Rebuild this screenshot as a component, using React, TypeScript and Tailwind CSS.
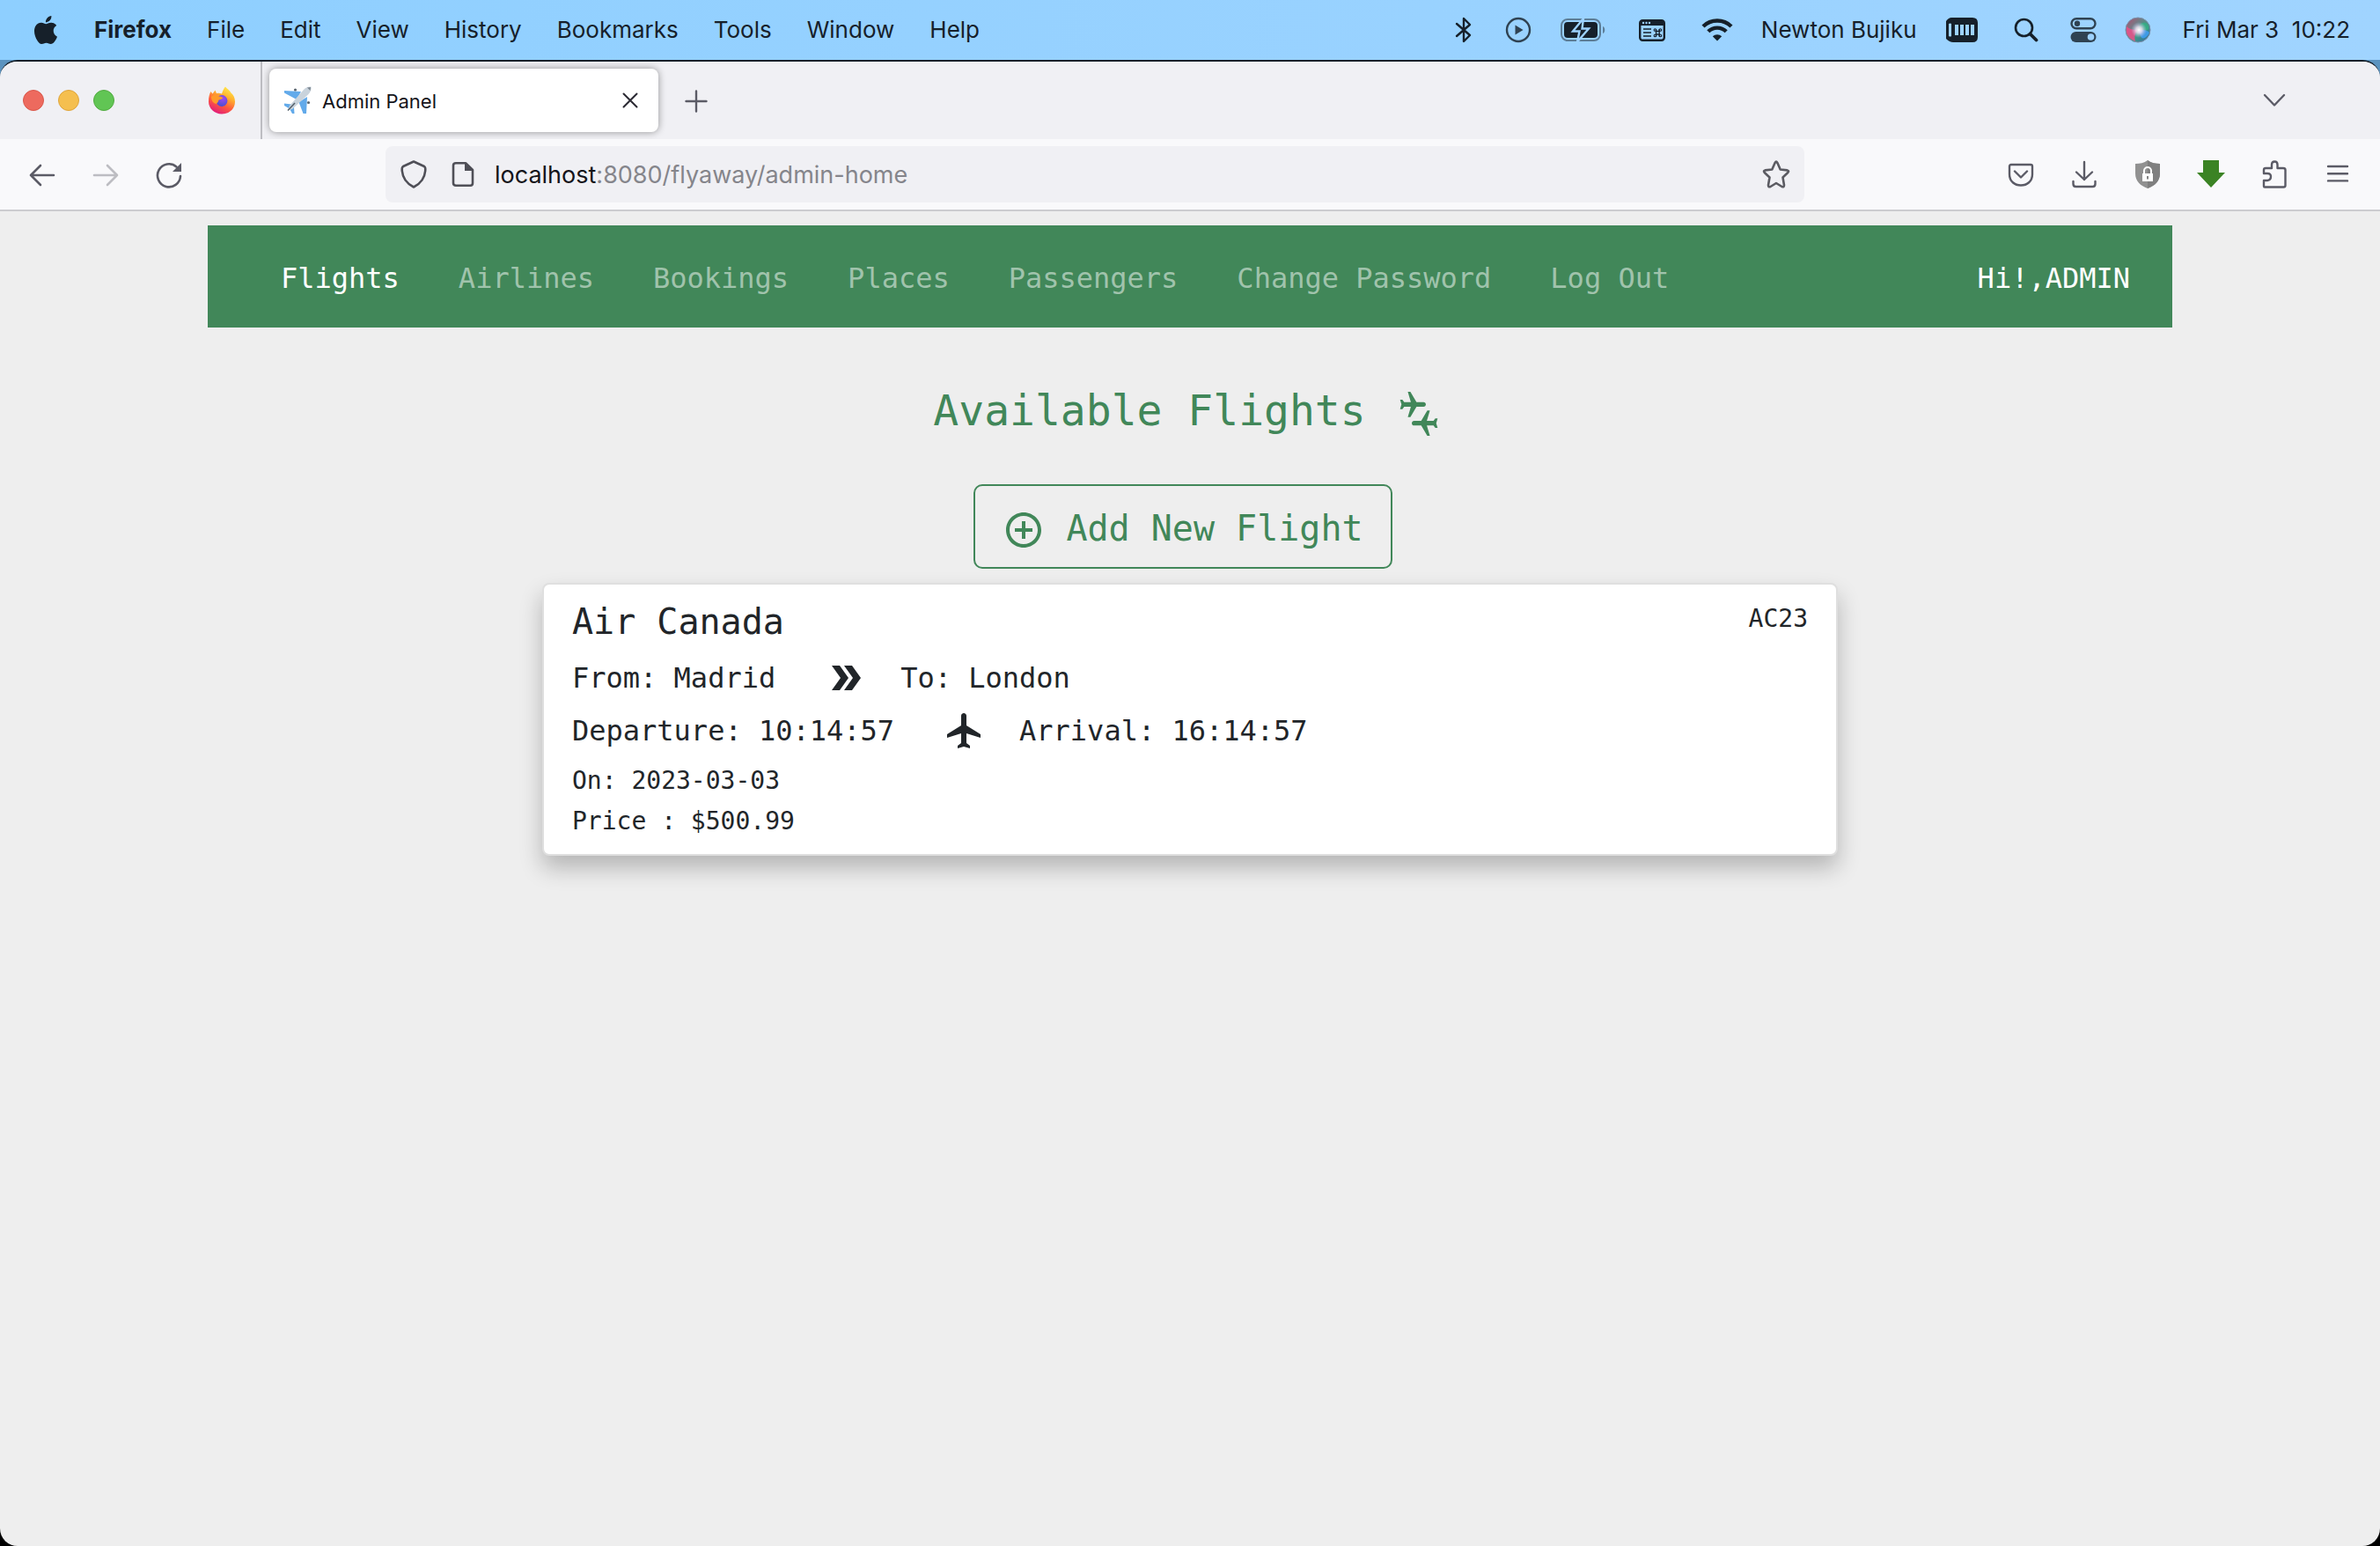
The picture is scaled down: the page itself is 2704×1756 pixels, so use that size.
import React from "react";
import { MdConnectingAirports, MdAddCircleOutline, MdDoubleArrow, MdFlight } from "react-icons/md";

const menus = ["File", "Edit", "View", "History", "Bookmarks", "Tools", "Window", "Help"];
const navLinks = ["Flights", "Airlines", "Bookings", "Places", "Passengers", "Change Password", "Log Out"];

function AppleLogo() {
  return (
    <svg viewBox="0 0 24 24" className="h-8 w-8" fill="#16202a" aria-hidden="true">
      <path d="M12.152 6.896c-.948 0-2.415-1.078-3.96-1.04-2.04.027-3.91 1.183-4.961 3.014-2.117 3.675-.546 9.103 1.519 12.09 1.013 1.454 2.208 3.09 3.792 3.039 1.52-.065 2.09-.987 3.935-.987 1.831 0 2.35.987 3.96.948 1.637-.026 2.676-1.48 3.676-2.948 1.156-1.688 1.636-3.325 1.662-3.415-.039-.013-3.182-1.221-3.22-4.857-.026-3.04 2.48-4.494 2.597-4.559-1.429-2.09-3.623-2.324-4.39-2.376-2-.156-3.675 1.09-4.61 1.09zM15.53 3.83c.843-1.012 1.4-2.427 1.245-3.83-1.207.052-2.662.805-3.532 1.818-.78.896-1.454 2.338-1.273 3.714 1.338.104 2.715-.688 3.559-1.701" />
    </svg>
  );
}

function StatusIcons() {
  return (
    <>
      <svg viewBox="0 0 20 32" className="h-8 w-5" fill="none" stroke="#16202a" strokeWidth="2.4" strokeLinejoin="round" strokeLinecap="round" role="img" aria-label="Bluetooth">
        <path d="M2 9 L17 22 L10 29 V3 L17 10 L2 23" />
      </svg>
      <svg viewBox="0 0 32 32" className="ml-9 h-8 w-8" role="img" aria-label="Now playing">
        <circle cx="16" cy="16" r="13" fill="none" stroke="#2f4252" strokeWidth="2.4" />
        <path d="M12.5 10.5 V21.5 L21.5 16 Z" fill="#2f4252" />
      </svg>
      <svg viewBox="0 0 52 32" className="ml-8 h-8 w-[52px]" role="img" aria-label="Battery charging">
        <rect x="1" y="4" width="44" height="24" rx="7" fill="none" stroke="#5c7d97" strokeWidth="2" />
        <path d="M48 12 C51 13 51 19 48 20 Z" fill="#5c7d97" />
        <rect x="4" y="7" width="38" height="18" rx="4" fill="#16202a" />
        <path d="M26 3 L14 17.5 H21.5 L19 29.5 L32 14.5 H24.5 Z" fill="#16202a" stroke="#9dd2ff" strokeWidth="2.4" />
      </svg>
      <svg viewBox="0 0 32 32" className="ml-9 h-8 w-8" role="img" aria-label="Shortcuts">
        <rect x="2.2" y="5.2" width="27.6" height="22.6" rx="3" fill="none" stroke="#16202a" strokeWidth="2.4" />
        <path d="M2 6 H30 V11 H2 Z" fill="#16202a" />
        <g fill="#9dd2ff">
          <circle cx="6" cy="8" r="1.2" />
          <circle cx="9.500" cy="8" r="1.2" />
          <circle cx="13" cy="8" r="1.2" />
        </g>
        <path d="M6 15 H15 M6 19 H15 M6 23 H15" stroke="#16202a" strokeWidth="1.6" />
        <path d="M20 17.500 H25 M20 21 H25 M20.500 15 V23.500 M24.200 15 V23.500" stroke="#16202a" strokeWidth="1.3" />
        <g fill="none" stroke="#16202a" strokeWidth="1.1">
          <circle cx="19.400" cy="16" r="1.300" />
          <circle cx="25.400" cy="16" r="1.300" />
          <circle cx="19.400" cy="22.500" r="1.300" />
          <circle cx="25.400" cy="22.500" r="1.300" />
        </g>
      </svg>
      <svg viewBox="0 0 36 28" className="ml-10 h-7 w-9" role="img" aria-label="Wi-Fi" fill="none" stroke="#16202a">
        <path d="M2 10 A23 23 0 0 1 34 10" strokeWidth="4.400" />
        <path d="M7.800 15.800 A14.500 14.500 0 0 1 28.200 15.800" strokeWidth="4.400" />
        <path d="M18 26.500 L12.800 21.300 A7.500 7.500 0 0 1 23.200 21.300 Z" fill="#16202a" stroke="none" />
      </svg>
    </>
  );
}

function RightStatusIcons() {
  return (
    <>
      <svg viewBox="0 0 38 32" className="ml-8 h-8 w-[38px]" role="img" aria-label="Memory">
        <path d="M7 2 H31 Q37 2 37 8 V24 Q37 30 31 30 H9 Q5 30 1 26 V6 Q4 2 7 2 Z" fill="#16202a" />
        <path d="M4 9 Q6 8 7 9 V23 Q6 24 4 23 Z M11 10 H15 V22 H11 Z M17 10 H21 V22 H17 Z M23 10 H27 V22 H23 Z M29 10 H33 V22 H29 Z" fill="#9dd2ff" />
      </svg>
      <svg viewBox="0 0 28 28" className="ml-10 h-7 w-7" fill="none" stroke="#16202a" role="img" aria-label="Search">
        <circle cx="11.500" cy="11.500" r="9.500" strokeWidth="2.600" />
        <path d="M18.500 18.500 L25.500 25.500" strokeWidth="3.800" strokeLinecap="round" />
      </svg>
      <svg viewBox="0 0 30 30" className="ml-9 h-[30px] w-[30px]" role="img" aria-label="Control Centre">
        <rect x="1.500" y="2.200" width="27" height="11" rx="5.500" fill="none" stroke="#2f4252" strokeWidth="2.400" />
        <circle cx="8" cy="7.700" r="3.200" fill="#2f4252" />
        <rect x="0.500" y="17" width="29" height="12" rx="6" fill="#2f4252" />
        <circle cx="23.500" cy="23" r="3.800" fill="#9dd2ff" />
      </svg>
      <svg viewBox="0 0 30 30" className="ml-8 h-[30px] w-[30px]" role="img" aria-label="Siri">
        <defs>
          <linearGradient id="siri-a" x1="0" y1="0" x2="1" y2="1">
            <stop offset="0" stopColor="#b8486e" />
            <stop offset="0.350" stopColor="#6f7f86" />
            <stop offset="0.600" stopColor="#3f9a86" />
            <stop offset="1" stopColor="#2f62a8" />
          </linearGradient>
          <radialGradient id="siri-b" cx="0.540" cy="0.500" r="0.320">
            <stop offset="0" stopColor="#ffffff" />
            <stop offset="0.400" stopColor="#f6e2f4" stopOpacity="0.800" />
            <stop offset="1" stopColor="#b9b4e6" stopOpacity="0" />
          </radialGradient>
        </defs>
        <circle cx="15" cy="15" r="14" fill="url(#siri-a)" stroke="#7c8ea8" strokeWidth="1" />
        <path d="M2 11 Q6 15 14 15 Q10 22 12 28 Q4 25 2 18 Z" fill="#ec4f88" opacity="0.850" />
        <path d="M15 14 Q18 4 25 8 Q29 13 26 15 Q22 16 16 15 Z" fill="#35ae84" opacity="0.900" />
        <path d="M15 15 Q24 14 28 18 Q24 26 19 24 Z" fill="#3f9cf0" opacity="0.900" />
        <circle cx="15" cy="15" r="14" fill="url(#siri-b)" />
      </svg>
    </>
  );
}

function MenuBar() {
  return (
    <header className="flex h-[68px] items-center bg-linear-to-r from-[#8ecfff] to-[#a0d4ff] pr-[34px] pl-9 text-[26px] leading-8 text-[#16202a]">
      <AppleLogo />
      <nav aria-label="Application menu" className="ml-[39px] flex gap-10">
        <button type="button" className="font-bold">Firefox</button>
        {menus.map((m) => (
          <button key={m} type="button">{m}</button>
        ))}
      </nav>
      <div className="ml-auto flex items-center">
        <StatusIcons />
        <span className="ml-8">Newton Bujiku</span>
        <RightStatusIcons />
        <time className="ml-9 whitespace-pre">Fri Mar 3  10:22</time>
      </div>
    </header>
  );
}

function FirefoxLogo() {
  return (
    <svg viewBox="0 0 32 32" className="h-8 w-8" aria-hidden="true">
      <defs>
        <linearGradient id="ff-a" x1="0.800" y1="0" x2="0.300" y2="1">
          <stop offset="0" stopColor="#fff14f" />
          <stop offset="0.350" stopColor="#ffb02e" />
          <stop offset="0.650" stopColor="#ff5a3c" />
          <stop offset="1" stopColor="#e0197f" />
        </linearGradient>
        <radialGradient id="ff-b" cx="0.600" cy="0.300" r="0.700">
          <stop offset="0" stopColor="#a04af0" />
          <stop offset="1" stopColor="#4a4fd0" />
        </radialGradient>
      </defs>
      <path d="M20 0.500 C22 3 25 4.500 26.500 7.500 C29 9.500 31 13 31 17.500 C31 25.500 24.500 31.500 16 31.500 C7.500 31.500 1 25 1 17.500 C1 12 2 8.500 3.500 6 L5.500 8.500 L8.500 4.500 L10 8 C12 7.500 14 7.500 16 8.500 C17 5.500 18 2.500 20 0.500 Z" fill="url(#ff-a)" />
      <circle cx="16" cy="16.500" r="6.400" fill="url(#ff-b)" />
      <path d="M4 12 C7 9 10 10 13 11.500 C16 11.500 17 12.500 17 13.500 C15.500 15 13.500 15 12.500 15.500 C12 18 11 19 9.500 20 C6 19 4 16 4 12 Z" fill="#ff9a2a" />
    </svg>
  );
}

function PlaneFavicon() {
  return (
    <svg viewBox="0 0 32 32" className="h-8 w-8" aria-hidden="true">
      <path d="M1 5 L20 6 L15 15 L1 7.500 Z M27 12 L26 31 L22.500 31 L17.500 18 Z" fill="#62aaea" />
      <path d="M1 19.500 L9 20.500 L12 24 L12.500 31 L10 31 L7 25.500 L1 22 Z" fill="#62aaea" />
      <path d="M31.500 0.500 C28 0 25 1.500 22.500 4.500 L7 22 L5 27.500 L10 26 L28 9.500 C31 6.500 32 3.500 31.500 0.500 Z" fill="#c9d3dc" />
      <path d="M5 27.500 L13 19" stroke="#55606a" strokeWidth="1.500" />
      <path d="M27 1.500 L31 1 L30.500 5 Z" fill="#7c8791" />
      <circle cx="13.500" cy="4" r="1.600" fill="#5a6670" />
      <circle cx="28.500" cy="18.500" r="1.600" fill="#5a6670" />
    </svg>
  );
}

function TabStrip() {
  return (
    <div className="flex h-[88px] items-stretch bg-[#f0f0f4]">
      <div className="flex items-center gap-4 pl-[26px]">
        <span className="size-6 rounded-full border border-[#d9584b] bg-[#ed6a5e]" />
        <span className="size-6 rounded-full border border-[#dfa53c] bg-[#f5bf4f]" />
        <span className="size-6 rounded-full border border-[#52ab41] bg-[#61c554]" />
      </div>
      <div className="ml-[106px] flex items-center border-r-2 border-[#bdbdc2] pr-7">
        <FirefoxLogo />
      </div>
      <div className="my-2 ml-2 flex w-[442px] items-center rounded-lg bg-white pr-[15px] pl-4 shadow-[0_0_8px_rgba(0,0,0,0.4)]">
        <PlaneFavicon />
        <span className="ml-3 pt-0.5 text-[22px] leading-7 text-[#15141a]">Admin Panel</span>
        <button type="button" aria-label="Close tab" className="ml-auto p-2">
          <svg viewBox="0 0 18 18" className="size-[18px]" stroke="#2b2a33" strokeWidth="2" strokeLinecap="round">
            <path d="M1.500 1.500 L16.500 16.500 M16.500 1.500 L1.500 16.500" />
          </svg>
        </button>
      </div>
      <button type="button" aria-label="New tab" className="ml-[30px] pt-0.5">
        <svg viewBox="0 0 26 26" className="size-[26px]" stroke="#5b5b66" strokeWidth="2.400" strokeLinecap="round">
          <path d="M13 1.500 V24.500 M1.500 13 H24.500" />
        </svg>
      </button>
      <button type="button" aria-label="List all tabs" className="mr-[107px] ml-auto">
        <svg viewBox="0 0 26 16" className="h-4 w-[26px]" fill="none" stroke="#5b5b66" strokeWidth="2.400" strokeLinecap="round" strokeLinejoin="round">
          <path d="M2 2 L13 13.500 L24 2" />
        </svg>
      </button>
    </div>
  );
}

function Toolbar() {
  return (
    <div className="flex h-[82px] items-center border-b-2 border-[#cccccf] bg-[#f9f9fb] pr-8 pl-8">
      <div className="flex items-center gap-10 pt-0.5">
        <button type="button" aria-label="Back">
          <svg viewBox="0 0 32 32" className="size-8" fill="none" stroke="#5b5b66" strokeWidth="2.600" strokeLinecap="round" strokeLinejoin="round">
            <path d="M14 5 L3 16 L14 27 M3 16 H29" />
          </svg>
        </button>
        <button type="button" aria-label="Forward">
          <svg viewBox="0 0 32 32" className="size-8" fill="none" stroke="#bdbdc2" strokeWidth="2.600" strokeLinecap="round" strokeLinejoin="round">
            <path d="M18 5 L29 16 L18 27 M3 16 H29" />
          </svg>
        </button>
        <button type="button" aria-label="Reload">
          <svg viewBox="0 0 32 32" className="size-8" fill="none" stroke="#5b5b66" strokeWidth="2.600" strokeLinecap="round">
            <path d="M29 17 A13 13 0 1 1 24.500 6.500" />
            <path d="M30 2 V12 H20 Z" fill="#5b5b66" stroke="none" />
          </svg>
        </button>
      </div>
      <div className="ml-[230px] flex h-16 w-[1612px] items-center rounded-lg bg-[#f0f0f4] pr-4 pl-4">
        <svg viewBox="0 0 32 32" className="size-8" fill="none" stroke="#4f4f57" strokeWidth="2.600" strokeLinejoin="round" role="img" aria-label="Tracking protection">
          <path d="M16 1.500 L28 7 C29.500 8 29.500 9.500 29.200 12 C28.500 20 25 26 16 30.500 C7 26 3.500 20 2.800 12 C2.500 9.500 2.500 8 4 7 Z" />
        </svg>
        <svg viewBox="0 0 32 32" className="ml-6 size-8" fill="none" stroke="#4f4f57" strokeWidth="2.600" strokeLinejoin="round" role="img" aria-label="Site information">
          <path d="M8 3.300 H19 L27 11 V26 Q27 28.700 24.500 28.700 H8 Q5 28.700 5 26 V6 Q5 3.300 8 3.300 Z" />
          <path d="M18 3 V12 H27 Z" fill="#4f4f57" stroke="none" />
        </svg>
        <a href="#" className="ml-5 pt-0.5 text-[27px] leading-8 text-[#85858b]">
          <span className="text-[#15141a]">localhost</span>:8080/flyaway/admin-home
        </a>
        <button type="button" aria-label="Bookmark this page" className="ml-auto">
          <svg viewBox="0 0 32 32" className="size-8" fill="none" stroke="#5b5b62" strokeWidth="2.600" strokeLinejoin="round">
            <path d="M14.700 2.800 Q16 0.500 17.300 2.800 L20.700 10.500 L28.600 11.400 Q31 12 29.300 14 L23.500 19.500 L25 28.300 Q25 31 22.500 30 L16 26 L9.500 30 Q7 31 7 28.300 L8.500 19.500 L2.700 14 Q1 12 3.400 11.400 L11.300 10.500 Z" />
          </svg>
        </button>
      </div>
      <div className="ml-auto flex items-center gap-10">
        <button type="button" aria-label="Save to Pocket">
          <svg viewBox="0 0 32 32" className="size-8" fill="none" stroke="#5b5b66" strokeWidth="2.400" strokeLinecap="round" strokeLinejoin="round">
            <path d="M5 5 H27 Q29 5 29 7 V16 C29 24 23 28.500 16 28.500 C9 28.500 3 24 3 16 V7 Q3 5 5 5 Z M9 12.500 L16 19.500 L23 12.500" />
          </svg>
        </button>
        <button type="button" aria-label="Downloads">
          <svg viewBox="0 0 32 32" className="size-8" fill="none" stroke="#5b5b66" strokeWidth="2.400" strokeLinecap="round" strokeLinejoin="round">
            <path d="M16 2 V22 M7 13.500 L16 22 L25 13.500 M3.500 24 V27 Q3.500 30 6.500 30 H25.500 Q28.500 30 28.500 27 V24" />
          </svg>
        </button>
        <button type="button" aria-label="Privacy shield">
          <svg viewBox="0 0 32 32" className="size-8">
            <path d="M16 0 C20 3 25 4 30 4 V15 C30 24 24 29 16 32 C8 29 2 24 2 15 V4 C7 4 12 3 16 0 Z" fill="#919191" />
            <path d="M16 0 C20 3 25 4 30 4 V15 C30 24 24 29 16 32 Z" fill="#7f7f7f" />
            <path d="M10 15 H22 V24 H10 Z" fill="#fff" />
            <path d="M12 15 V12 A4 4 0 0 1 20 12 V15" fill="none" stroke="#fff" strokeWidth="2" />
            <path d="M16 18 V21.500" stroke="#777" strokeWidth="1.800" />
          </svg>
        </button>
        <button type="button" aria-label="Download helper">
          <svg viewBox="0 0 32 32" className="size-8" fill="#3b8324">
            <path d="M7 0 H25 V14 H32 L16 31 L0 14 H7 Z" />
          </svg>
        </button>
        <button type="button" aria-label="Extensions">
          <svg viewBox="0 0 32 32" className="size-8" fill="none" stroke="#5b5b66" strokeWidth="2.400" strokeLinejoin="round">
            <path d="M5 30.500 Q4 30.500 4 29.500 V23 H8 Q12 22.500 12 18.500 Q12 15 8 15 H4 V11 Q4 9 6 9 H13 V5 Q13 1.500 16.300 1.500 Q19.500 1.500 19.500 5 V9 H26 Q28.500 9 28.500 11 V28.500 Q28.500 30.500 26.500 30.500 Z" />
          </svg>
        </button>
        <button type="button" aria-label="Open application menu">
          <svg viewBox="0 0 32 32" className="size-8" stroke="#5b5b66" strokeWidth="2.400" strokeLinecap="round">
            <path d="M5 7 H27 M5 15.200 H27 M5 23.400 H27" />
          </svg>
        </button>
      </div>
    </div>
  );
}

function FlightCard() {
  return (
    <article className="mx-auto mt-4 w-[1472px] max-w-full rounded-lg border-2 border-[#dfdfdf] bg-white px-8 pt-[18px] pb-[14px] text-[#212529] shadow-[0_14px_26px_rgba(0,0,0,0.24)]">
      <div className="flex items-start justify-between">
        <h2 className="text-[40px] leading-[48px]">Air Canada</h2>
        <span className="text-[28px] leading-[42px]">AC23</span>
      </div>
      <p className="mt-[14px] flex items-center text-[32px] leading-[52px]">
        From: Madrid
        <MdDoubleArrow className="mr-[38px] ml-14 size-12" />
        To: London
      </p>
      <p className="mt-2 flex items-center text-[32px] leading-[52px]">
        Departure: 10:14:57
        <MdFlight className="mr-[38px] ml-14 size-12" />
        Arrival: 16:14:57
      </p>
      <p className="mt-2 text-[28px] leading-[46px]">On: 2023-03-03</p>
      <p className="text-[28px] leading-[46px]">Price : $500.99</p>
    </article>
  );
}

export default function App() {
  return (
    <div className="flex min-h-screen flex-col bg-[#16202a] font-[Inter,sans-serif]">
      <MenuBar />
      <div className="flex flex-1 flex-col bg-linear-to-b from-[#5b93bf] from-50% to-black to-50%">
        <div className="flex flex-1 flex-col overflow-hidden rounded-[20px] border-t-2 border-[#16202a] bg-[#eeeeee]">
          <TabStrip />
          <Toolbar />
          <main className="flex-1 px-[236px] pt-4 font-['DejaVu_Sans_Mono',monospace]">
            <nav aria-label="Main" className="flex h-[116px] items-center bg-[#418759] pt-1 pr-12 pl-[83px] text-[32px] leading-[48px] text-[#a0c3ac]">
              <ul className="flex gap-[67px]">
                {navLinks.map((l) => (
                  <li key={l}>
                    <a href="#" className={l === "Flights" ? "text-white" : ""}>{l}</a>
                  </li>
                ))}
              </ul>
              <span className="ml-auto text-white">Hi!,ADMIN</span>
            </nav>
            <h1 className="mt-[66px] flex items-start justify-center text-[48px] leading-[56px] text-[#418759]">
              Available Flights
              <MdConnectingAirports className="ml-7 size-16" />
            </h1>
            <div className="mt-12 flex justify-center pr-4">
              <button type="button" className="flex h-24 items-start rounded-[10px] border-2 border-[#418759] px-[31px] pt-[26px] text-[40px] leading-[44px] text-[#418759]">
                <MdAddCircleOutline className="mr-6 size-12" />
                Add New Flight
              </button>
            </div>
            <FlightCard />
          </main>
        </div>
      </div>
    </div>
  );
}
